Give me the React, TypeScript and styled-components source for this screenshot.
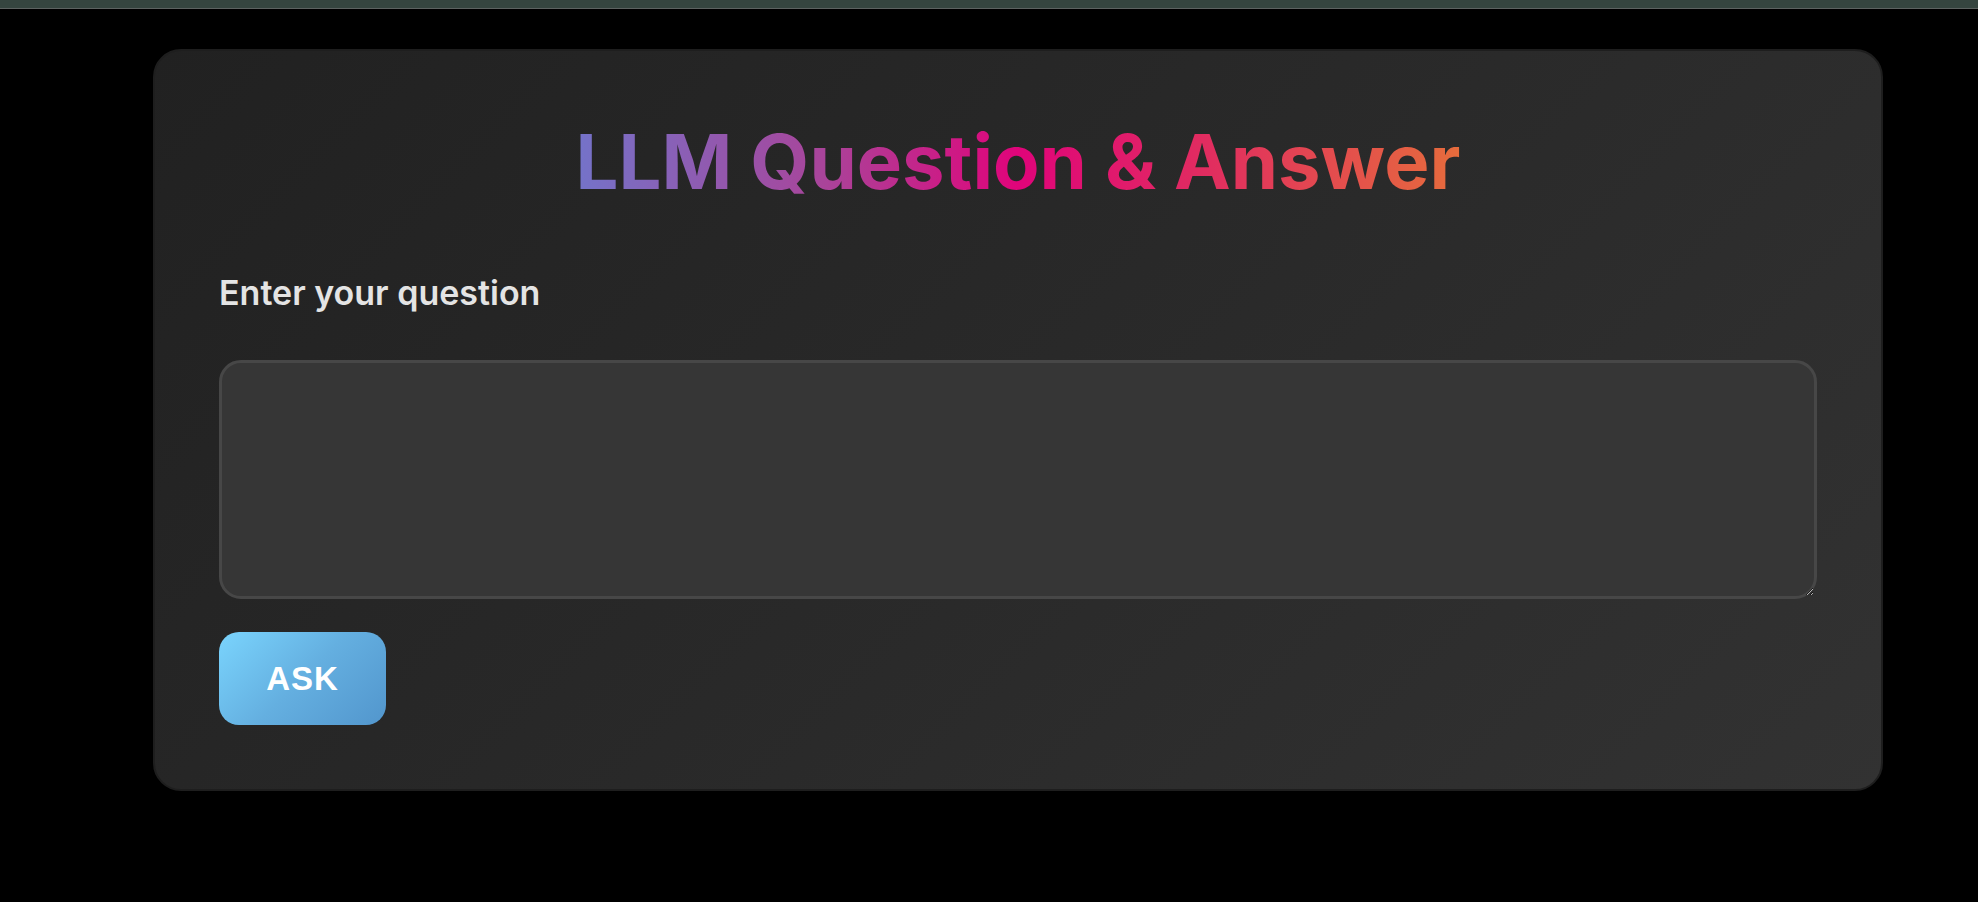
import React, { useState } from "react";
import styled, { createGlobalStyle } from "styled-components";

const GlobalStyle = createGlobalStyle`
  html, body {
    margin: 0;
    padding: 0;
    background: #000;
  }
  * {
    box-sizing: border-box;
  }
`;

const TopBar = styled.div`
  height: 9px;
  background: #35453f;
  border-bottom: 1px solid #5d6361;
`;

const Page = styled.div`
  padding: 40px 0 0 153px;
  min-height: 893px;
  background: #000;
`;

const Card = styled.div`
  width: 1730px;
  padding: 64px 64px 64px;
  border: 2px solid #1e1e1e;
  border-radius: 28px;
  background: linear-gradient(135deg, #212121 0%, #2a2a2a 55%, #323232 100%);
  display: flex;
  flex-direction: column;
`;

const Title = styled.h1`
  margin: 0;
  text-align: center;
  font-family: Inter, "Liberation Sans", sans-serif;
  font-weight: 700;
  font-size: 76px;
  line-height: 92px;
  background: linear-gradient(90deg, #7473c9 0%, #a9449a 28%, #e0047a 50%, #e12e5f 72%, #e66c3c 100%);
  -webkit-background-clip: text;
  background-clip: text;
  color: transparent;
  width: fit-content;
  align-self: center;
`;

const Label = styled.label`
  margin-top: 65px;
  font-family: Inter, "Liberation Sans", sans-serif;
  font-weight: 600;
  font-size: 34px;
  line-height: 41px;
  color: #e4e4e4;
`;

const QuestionInput = styled.textarea`
  margin-top: 47px;
  width: 100%;
  height: 239px;
  background: #363636;
  border: 3px solid #474747;
  border-radius: 22px;
  color: #eee;
  font-family: Inter, "Liberation Sans", sans-serif;
  font-size: 24px;
  padding: 16px 20px;
  outline: none;
  resize: vertical;
`;

const AskButton = styled.button`
  margin-top: 33px;
  width: 167px;
  height: 93px;
  border: none;
  border-radius: 20px;
  background: linear-gradient(135deg, #7ad4fd 0%, #64afe0 50%, #5296cd 100%);
  color: #fff;
  font-family: "Liberation Sans", Arial, sans-serif;
  font-weight: 700;
  font-size: 33px;
  letter-spacing: 1px;
  cursor: pointer;
`;

const App = () => {
  const [question, setQuestion] = useState("");
  return (
    <>
      <GlobalStyle />
      <TopBar />
      <Page>
        <Card>
          <Title>LLM Question &amp; Answer</Title>
          <Label htmlFor="question">Enter your question</Label>
          <QuestionInput
            id="question"
            value={question}
            onChange={(e) => setQuestion(e.target.value)}
          />
          <div>
            <AskButton>ASK</AskButton>
          </div>
        </Card>
      </Page>
    </>
  );
};

export default App;
